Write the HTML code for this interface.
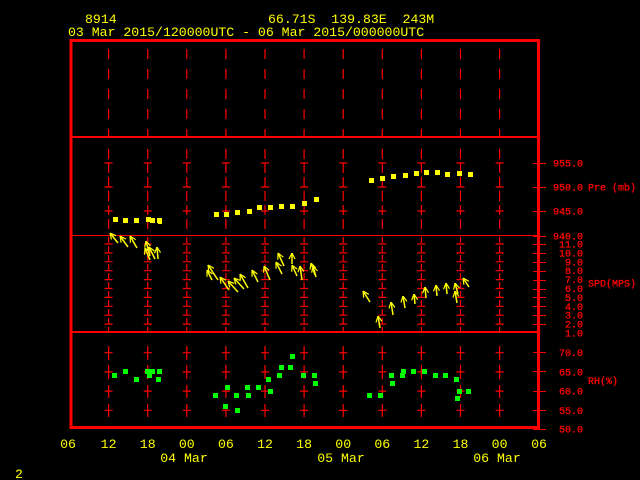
<!DOCTYPE html>
<html><head><meta charset="utf-8"><style>
html,body{margin:0;padding:0;background:#000;width:640px;height:480px;overflow:hidden}
svg{display:block}
text{font-family:"Liberation Mono",monospace}
</style></head><body>
<svg width="640" height="480" viewBox="0 0 640 480" xmlns="http://www.w3.org/2000/svg">
<defs>
<marker id="ah" markerWidth="8" markerHeight="8" refX="0" refY="4" orient="auto" markerUnits="userSpaceOnUse">
<path d="M6 1 L0 4 L6 7" fill="none" stroke="#ffff00" stroke-width="1.2"/>
</marker>
<g id="col" stroke="#f00" stroke-width="1.2" fill="none">
<path d="M0 49V137" stroke-dasharray="10 10"/>
<path d="M0 149V233" stroke-dasharray="10 4"/>
<path d="M-4 163H4M-4 187H4M-4 211H4"/>
<path d="M0 237V331" stroke-dasharray="6 3"/>
<path d="M-4 244H4M-4 252.9H4M-4 261.8H4M-4 270.7H4M-4 279.6H4M-4 288.5H4M-4 297.4H4M-4 306.3H4M-4 315.2H4M-4 324.1H4"/>
<path d="M0 346V360M0 365V379M0 385V398M0 404V417"/>
<path d="M-4 352.7H4M-4 371.9H4M-4 391.1H4M-4 410.3H4"/>
</g>
</defs>
<g fill="#ffff00" font-size="13.2">
<text x="85" y="23">8914</text>
<text x="268" y="23" xml:space="preserve">66.71S  139.83E  243M</text>
<text x="68" y="36">03 Mar 2015/120000UTC - 06 Mar 2015/000000UTC</text>
</g>
<use href="#col" x="108.6"/><use href="#col" x="147.7"/><use href="#col" x="186.8"/>
<use href="#col" x="225.9"/><use href="#col" x="265"/><use href="#col" x="304.1"/>
<use href="#col" x="343.2"/><use href="#col" x="382.3"/><use href="#col" x="421.4"/>
<use href="#col" x="460.5"/><use href="#col" x="499.6"/>
<g stroke="#f00" fill="none" shape-rendering="crispEdges">
<rect x="71" y="40.5" width="467.5" height="387" stroke-width="3"/>
<path d="M71 137H538" stroke-width="2"/>
<path d="M71 235.5H538" stroke-width="1"/>
<path d="M71 332H538" stroke-width="2"/>
<path stroke-width="1" d="M533 163.5H546M533 187.5H546M533 211.5H546M533 236.5H546M533 244.5H546M533 253.5H546M533 262.5H546M533 271.5H546M533 280.5H546M533 289.5H546M533 297.5H546M533 306.5H546M533 315.5H546M533 324.5H546M533 352.5H546M533 371.5H546M533 391.5H546M533 410.5H546M533 429.5H546"/>
</g>
<g fill="#f00" font-size="10" text-anchor="end" stroke="#f00" stroke-width="0.3">
<text x="583" y="166.5">955.0</text><text x="583" y="190.5">950.0</text><text x="583" y="214.5">945.0</text>
<text x="583" y="239.5">940.0</text><text x="583" y="247.5">11.0</text><text x="583" y="256.4">10.0</text>
<text x="583" y="265.3">9.0</text><text x="583" y="274.2">8.0</text><text x="583" y="283.1">7.0</text>
<text x="583" y="292">6.0</text><text x="583" y="300.9">5.0</text><text x="583" y="309.8">4.0</text>
<text x="583" y="318.7">3.0</text><text x="583" y="327.6">2.0</text><text x="583" y="336.5">1.0</text>
<text x="583" y="356.2">70.0</text><text x="583" y="375.4">65.0</text><text x="583" y="394.6">60.0</text>
<text x="583" y="413.8">55.0</text><text x="583" y="432.5">50.0</text>
</g>
<g fill="#f00" font-size="10" stroke="#f00" stroke-width="0.3">
<text x="588" y="190.5">Pre (mb)</text>
<text x="588" y="286.5">SPD(MPS)</text>
<text x="588" y="384">RH(%)</text>
</g>
<g fill="#ffff00" font-size="13.2" text-anchor="middle">
<text x="68" y="448">06</text><text x="108.6" y="448">12</text><text x="147.7" y="448">18</text>
<text x="186.8" y="448">00</text><text x="225.9" y="448">06</text><text x="265" y="448">12</text>
<text x="304.1" y="448">18</text><text x="343.2" y="448">00</text><text x="382.3" y="448">06</text>
<text x="421.4" y="448">12</text><text x="460.5" y="448">18</text><text x="499.6" y="448">00</text>
<text x="539" y="448">06</text>
<text x="184" y="462">04 Mar</text><text x="341" y="462">05 Mar</text><text x="497" y="462">06 Mar</text>
</g>
<text x="15" y="478" fill="#ffff00" font-size="13.2">2</text>
<g fill="#ffff00" shape-rendering="crispEdges">
<rect x="113" y="217" width="5" height="5"/><rect x="123" y="218" width="5" height="5"/><rect x="134" y="218" width="5" height="5"/>
<rect x="146" y="217" width="5" height="5"/><rect x="150" y="218" width="5" height="5"/><rect x="157" y="218" width="5" height="5"/><rect x="158" y="220" width="4" height="4"/>
<rect x="214" y="212" width="5" height="5"/><rect x="215" y="213" width="4" height="4"/><rect x="224" y="212" width="5" height="5"/><rect x="235" y="210" width="5" height="5"/>
<rect x="247" y="209" width="5" height="5"/><rect x="257" y="205" width="5" height="5"/><rect x="268" y="205" width="5" height="5"/><rect x="279" y="204" width="5" height="5"/>
<rect x="290" y="204" width="5" height="5"/><rect x="302" y="201" width="5" height="5"/><rect x="314" y="197" width="5" height="5"/>
<rect x="369" y="178" width="5" height="5"/><rect x="380" y="176" width="5" height="5"/><rect x="391" y="174" width="5" height="5"/><rect x="403" y="173" width="5" height="5"/>
<rect x="414" y="171" width="5" height="5"/><rect x="424" y="170" width="5" height="5"/><rect x="435" y="170" width="5" height="5"/><rect x="445" y="172" width="5" height="5"/>
<rect x="457" y="171" width="5" height="5"/><rect x="468" y="172" width="5" height="5"/>
</g>
<g stroke="#ffff00" stroke-width="1.5" fill="none" marker-start="url(#ah)">
<path d="M110 233L118 243"/><path d="M120 236L128 247"/><path d="M130 236L137 248"/>
<path d="M146 241L150 256"/><path d="M149 247L155 259"/><path d="M157 247L158 259"/><path d="M145 248L150 260"/>
<path d="M208 265L218 280"/><path d="M207 270L212 280"/><path d="M220 277L229 290"/><path d="M228 281L238 292"/>
<path d="M234 278L244 289"/><path d="M240 274L248 288"/><path d="M252 270L258 282"/><path d="M264 266L270 280"/>
<path d="M276 262L282 274"/><path d="M278 253L284 266"/><path d="M292 265L297 276"/><path d="M292 253V264"/>
<path d="M300 266L302 280"/><path d="M311 263L315 275"/><path d="M313 266L316 277"/>
<path d="M363 291L370 302"/><path d="M378 316L380 328"/><path d="M391 302L393 315"/><path d="M403 296L405 308"/>
<path d="M414 294L415 304"/><path d="M425 287L426 298"/><path d="M436 285L437 296"/><path d="M446 283L447 294"/>
<path d="M455 283L458 294"/><path d="M455 291L457 303"/><path d="M463 278L469 287"/>
</g>
<g fill="#00ff00" shape-rendering="crispEdges">
<rect x="112" y="373" width="5" height="5"/><rect x="123" y="369" width="5" height="5"/><rect x="134" y="377" width="5" height="5"/>
<rect x="145" y="369" width="5" height="5"/><rect x="147" y="373" width="5" height="5"/><rect x="150" y="369" width="5" height="5"/>
<rect x="156" y="377" width="5" height="5"/><rect x="157" y="369" width="5" height="5"/>
<rect x="213" y="393" width="5" height="5"/><rect x="225" y="385" width="5" height="5"/><rect x="223" y="404" width="5" height="5"/>
<rect x="234" y="393" width="5" height="5"/><rect x="235" y="408" width="5" height="5"/><rect x="245" y="385" width="5" height="5"/>
<rect x="246" y="393" width="5" height="5"/><rect x="256" y="385" width="5" height="5"/><rect x="266" y="377" width="5" height="5"/>
<rect x="268" y="389" width="5" height="5"/><rect x="277" y="373" width="5" height="5"/><rect x="279" y="365" width="5" height="5"/>
<rect x="288" y="365" width="5" height="5"/><rect x="290" y="354" width="5" height="5"/><rect x="301" y="373" width="5" height="5"/>
<rect x="312" y="373" width="5" height="5"/><rect x="313" y="381" width="5" height="5"/>
<rect x="367" y="393" width="5" height="5"/><rect x="378" y="393" width="5" height="5"/><rect x="389" y="373" width="5" height="5"/>
<rect x="390" y="381" width="5" height="5"/><rect x="400" y="373" width="5" height="5"/><rect x="401" y="369" width="5" height="5"/>
<rect x="411" y="369" width="5" height="5"/><rect x="422" y="369" width="5" height="5"/><rect x="433" y="373" width="5" height="5"/>
<rect x="443" y="373" width="5" height="5"/><rect x="454" y="377" width="5" height="5"/><rect x="455" y="396" width="5" height="5"/>
<rect x="457" y="389" width="5" height="5"/><rect x="466" y="389" width="5" height="5"/>
</g>
</svg>
</body></html>
